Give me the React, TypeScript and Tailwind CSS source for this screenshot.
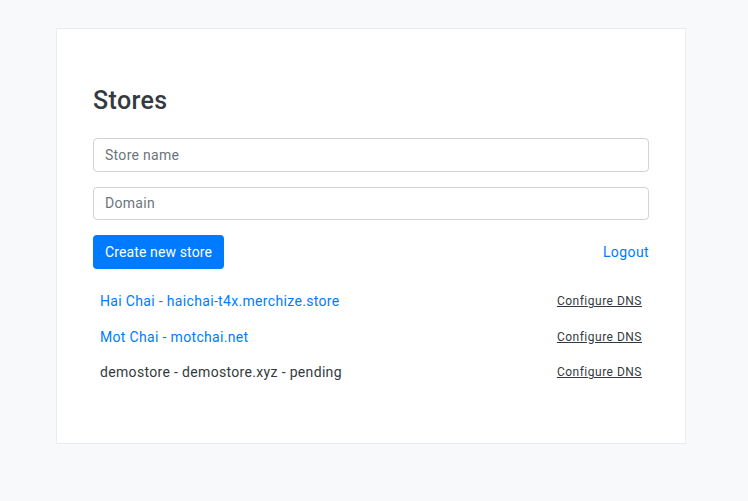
const stores = [
  { name: 'Hai Chai', domain: 'haichai-t4x.merchize.store', active: true },
  { name: 'Mot Chai', domain: 'motchai.net', active: true },
  { name: 'demostore', domain: 'demostore.xyz', active: false },
]

export default function App() {
  return (
    <div
      className="min-h-[501px] bg-[#f8f9fa] pt-[28px] pl-[56px]"
      style={{ fontFamily: 'Roboto, "Liberation Sans", sans-serif' }}
    >
      <div className="w-[630px] bg-white border border-[#e9ecef] pt-[57px] pb-[53px] px-[36px]">
        <h3 className="text-[25px] leading-[30px] font-medium tracking-[0.4px] text-[#343a40] mb-[22px]">Stores</h3>

        <input
          type="text"
          placeholder="Store name"
          className="block w-full h-[33.5px] px-[11px] text-sm tracking-[0.3px] text-[#495057] placeholder:text-[#6c757d] border border-[#ced4da] rounded-[4px] mb-[15px] outline-none"
        />
        <input
          type="text"
          placeholder="Domain"
          className="block w-full h-[33.5px] px-[11px] text-sm tracking-[0.3px] text-[#495057] placeholder:text-[#6c757d] border border-[#ced4da] rounded-[4px] mb-[15px] outline-none"
        />

        <div className="flex items-center justify-between">
          <button className="h-[33.5px] w-[131px] text-sm tracking-[0.13px] text-white bg-[#007bff] rounded-[4px]">
            Create new store
          </button>
          <a href="#" className="text-sm tracking-[0.4px] text-[#007bff]">Logout</a>
        </div>

        {/* store list */}
        <ul className="mt-[15px]">
          {stores.map((s) => (
            <li key={s.domain} className="flex items-center justify-between px-[7px] h-[35.5px]">
              {s.active ? (
                <a href="#" className="text-sm tracking-[0.33px] text-[#007bff]">
                  {s.name} - {s.domain}
                </a>
              ) : (
                <span className="text-sm tracking-[0.33px] text-[#343a40]">
                  {s.name} - {s.domain} - pending
                </span>
              )}
              <a href="#" className="text-xs tracking-[0.5px] text-[#343a40] underline">Configure DNS</a>
            </li>
          ))}
        </ul>
      </div>
    </div>
  )
}
